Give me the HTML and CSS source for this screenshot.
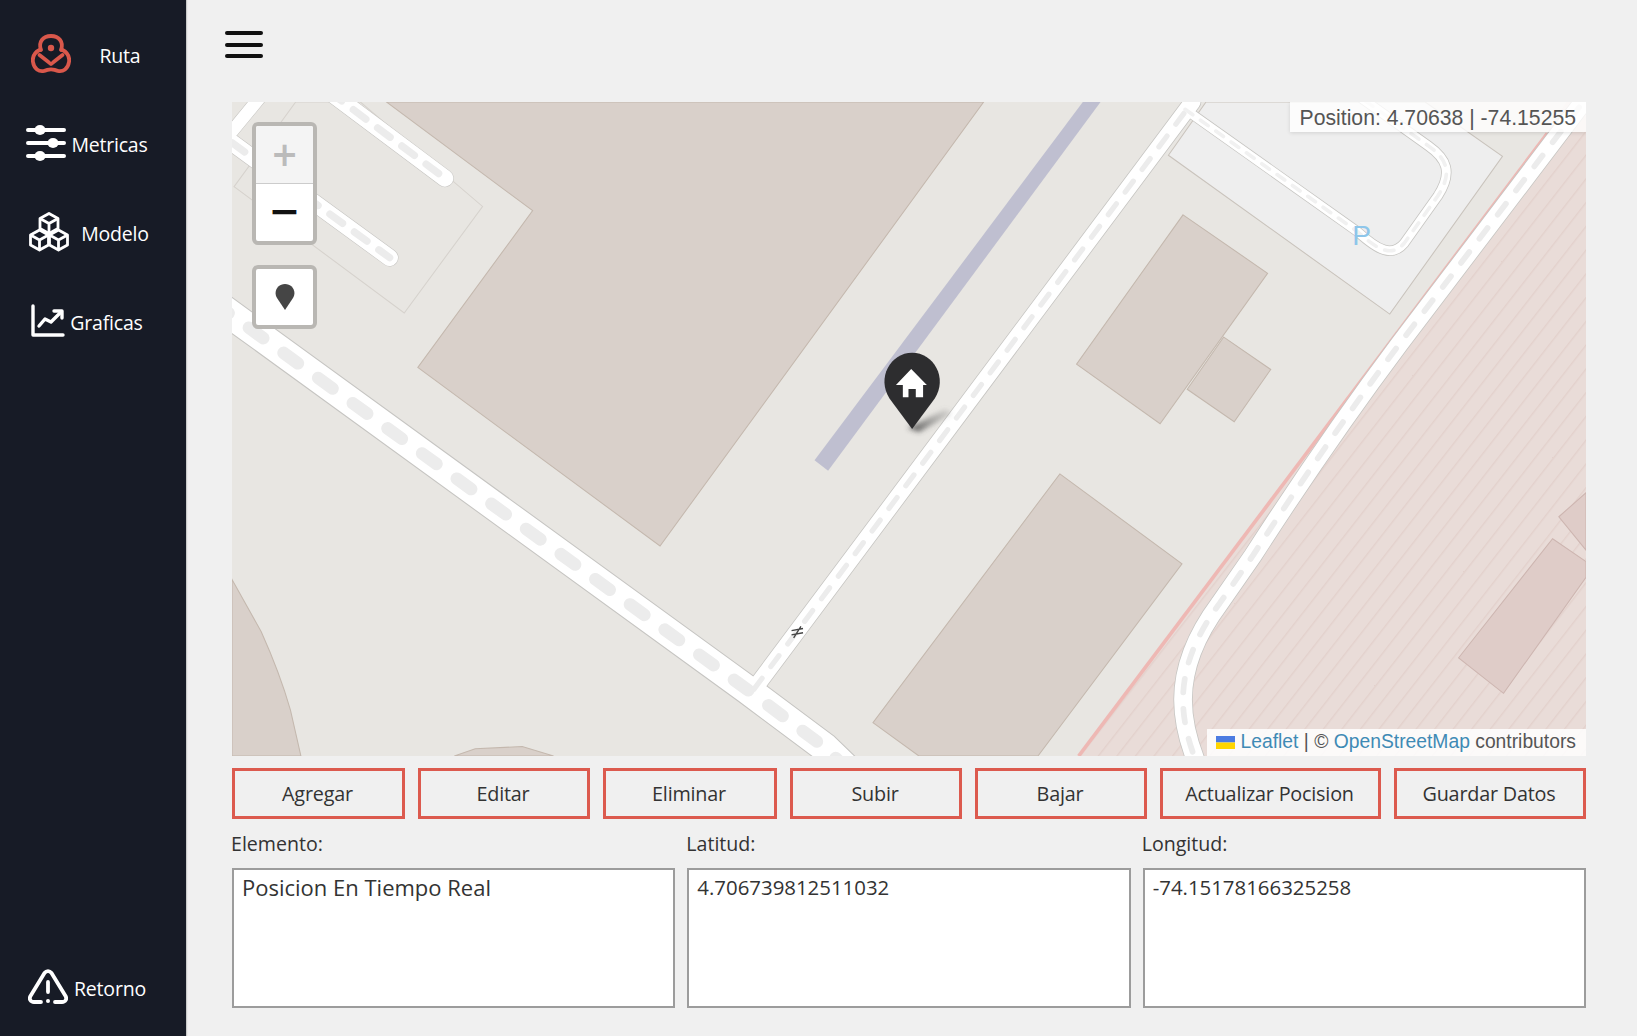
FILE: index.html
```html
<!DOCTYPE html>
<html lang="es">
<head>
<meta charset="utf-8">
<title>Ruta</title>
<link rel="stylesheet" href="styles.css">
</head>
<body>
<div class="app">
  <aside class="sidebar">
    <a class="nav-item nav-ruta">
      <svg class="icon" width="40" height="40" viewBox="0 0 40 40" fill="none" stroke="#d9584b" stroke-width="3.800" stroke-linecap="round" stroke-linejoin="round">
        <path d="M10 15C4 18 1 22 2 28C3 35 8 38 13 37C17 35 23 35 27 37C32 38 37 35 38 28C39 22 36 18 30 15"/>
        <path d="M8.500 21L20 30L31.500 21"/>
        <path d="M20 28L12 17C8 9 13 2 20 2C27 2 32 9 28 17Z" fill="#171b26" stroke="none"/>
        <path d="M10 16C7 8 12 2 20 2C28 2 33 8 30 16"/>
        <circle cx="20" cy="14" r="3.200" fill="#d9584b" stroke="none"/>
      </svg>
      <span>Ruta</span>
    </a>
    <a class="nav-item nav-metricas">
      <svg class="icon" width="40" height="36" viewBox="0 0 40 36" fill="none" stroke="#fff" stroke-width="4" stroke-linecap="round">
        <path d="M2 5H38M2 18H38M2 31H38"/>
        <ellipse cx="14" cy="5" rx="5.500" ry="5" fill="#fff" stroke="none"/>
        <ellipse cx="27" cy="18" rx="5.500" ry="5" fill="#fff" stroke="none"/>
        <ellipse cx="14" cy="31" rx="5.500" ry="5" fill="#fff" stroke="none"/>
      </svg>
      <span>Metricas</span>
    </a>
    <a class="nav-item nav-modelo">
      <svg class="icon" width="40" height="40" viewBox="0 0 40 40" fill="none" stroke="#fff" stroke-width="2.800" stroke-linejoin="round">
        <path d="M20 1.500L29 6.500V16.500L20 21.500L11 16.500V6.500Z"/>
        <path d="M11 6.500L20 11.500L29 6.500M20 11.500V21.500"/>
        <path d="M10.500 18L19.500 23V33L10.500 38L1.500 33V23Z"/>
        <path d="M1.500 23L10.500 28L19.500 23M10.500 28V38"/>
        <path d="M29.500 18L38.500 23V33L29.500 38L20.500 33V23Z"/>
        <path d="M20.500 23L29.500 28L38.500 23M29.500 28V38"/>
      </svg>
      <span>Modelo</span>
    </a>
    <a class="nav-item">
      <svg class="icon" width="34" height="33" viewBox="0 0 34 33" fill="none" stroke="#fff" stroke-width="3.400" stroke-linecap="round" stroke-linejoin="round">
        <path d="M2 2V31H32"/>
        <path d="M8 22L14 15L20 18L30 8"/>
        <path d="M23 7H31V14"/>
      </svg>
      <span>Graficas</span>
    </a>
    <a class="nav-item nav-retorno">
      <svg class="icon" width="40" height="36" viewBox="0 0 40 36" fill="none" stroke="#fff" stroke-width="3.800" stroke-linecap="round" stroke-linejoin="round">
        <path d="M13 33H6C2.500 33 .8 30 2.500 27L16.500 4C18.500 1.500 21.500 1.500 23.500 4L37.500 27C39.200 30 37.500 33 34 33H27"/>
        <path d="M20 13V23"/>
        <circle cx="20" cy="32" r="2" fill="#fff" stroke="none"/>
      </svg>
      <span>Retorno</span>
    </a>
  </aside>

  <main class="main">
    <header class="topbar">
      <div class="burger"><i></i><i></i><i></i></div>
    </header>

    <section class="map">
      <svg class="map-art" viewBox="222 98 1297 626" preserveAspectRatio="none">
        <defs>
          <pattern id="hatch" width="14" height="14" patternUnits="userSpaceOnUse" patternTransform="rotate(-52)">
            <rect width="14" height="14" fill="#e9dcd8"/>
            <rect width="14" height="1.300" fill="#e3d1cc"/>
          </pattern>
          <filter id="soft" x="-40%" y="-40%" width="180%" height="180%"><feGaussianBlur stdDeviation="2.500"/></filter>
          <linearGradient id="shade" x1="0" y1="1" x2="1" y2="0">
            <stop offset="0" stop-color="#333" stop-opacity=".8"/>
            <stop offset="1" stop-color="#777" stop-opacity=".15"/>
          </linearGradient>
        </defs>
        <rect class="land" x="222" y="98" width="1297" height="626"/>

        <polygon class="lot" points="224,179 283,98 345,98 462,198 387,300"/>
        <polygon class="parking" points="1119,149 1155,98 1365,98 1439,150 1331,301"/>

        <polygon class="building" points="370,98 942,98 632,523 400,352 510,202"/>
        <polygon class="building" points="1172,323 1217,354 1182,404 1137,373"/>
        <polygon class="building" points="1133,206 1214,262 1111,406 1031,349"/>
        <polygon class="building" points="1015,454 1132,540 994,724 880,724 836,692"/>
        <path class="building" d="M222 555L250 605Q268 645 278 680L288 724H222Z"/>
        <polygon class="building" points="435,724 455,717 500,715 530,724"/>

        <polygon class="purple" points="1037,98 1054,98 793,451 780,441"/>

        <polygon class="residential" points="1033,724 1480,130 1500,98 1519,98 1519,724"/>
        <polygon class="building-pink" points="1487,516 1519,538 1519,553 1440,664 1397,630"/>
        <polygon class="building-pink" points="1493,495 1519,472 1519,527"/>
        <path class="boundary" d="M1033 724L1482 128"/>

        <path class="casing wide" d="M205 290L715 660L790 716L820 745"/>
        <path class="casing mid" d="M722 660L1142 98"/>
        <path class="casing narrow" d="M315 88L426 171"/>
        <path class="casing narrow" d="M222 137L373 247"/>
        <path class="casing thin" d="M222 126L250 92"/>
        <path class="casing lane" d="M1135 105L1300 222C1320 240 1333 247 1345 233L1377 188C1392 165 1385 152 1368 140L1295 88"/>
        <path class="casing right" d="M1530 80L1340 330C1295 390 1240 470 1200 532L1168 578Q1133 625 1133 670Q1133 700 1148 735"/>

        <path class="fill wide" d="M205 290L715 660L790 716L820 745"/>
        <path class="fill mid" d="M722 660L1142 98"/>
        <path class="fill narrow" d="M315 88L426 171"/>
        <path class="fill narrow" d="M222 137L373 247"/>
        <path class="fill thin" d="M222 126L250 92"/>
        <path class="fill lane" d="M1135 105L1300 222C1320 240 1333 247 1345 233L1377 188C1392 165 1385 152 1368 140L1295 88"/>
        <path class="fill right" d="M1530 80L1340 330C1295 390 1240 470 1200 532L1168 578Q1133 625 1133 670Q1133 700 1148 735"/>

        <path class="dash wide-d" d="M205 290L715 660L790 716L820 745"/>
        <path class="dash mid-d" d="M722 660L1142 98"/>
        <path class="dash narrow-d" d="M315 88L426 171"/>
        <path class="dash narrow-d" d="M222 137L373 247"/>
        <path class="dash lane-d" d="M1135 105L1300 222C1320 240 1333 247 1345 233L1377 188C1392 165 1385 152 1368 140L1295 88"/>
        <path class="dash right-d" d="M1530 80L1340 330C1295 390 1240 470 1200 532L1168 578Q1133 625 1133 670Q1133 700 1148 735"/>

        <text class="parking-p" x="1295" y="235">P</text>
        <path class="oneway" d="M758 604L769 602M758 608L769 606M767 600L760 611"/>

        <path d="M869 410L905 392L912 396L880 414Z" fill="url(#shade)" filter="url(#soft)"/>
        <path class="pin" d="M873.500 411L852 382C839 362 853 338 873.500 338C894 338 908 362 895 382Z"/>
        <path class="pin-home" d="M872.600 353.600L887.600 368.800H884V380.600H877V372.800H870V380.600H864.600V368.800H858Z"/>
      </svg>

      <div class="controls">
        <div class="zoom">
          <span class="zoom-btn zoom-in">+</span>
          <span class="zoom-btn zoom-out">−</span>
        </div>
        <div class="locate">
          <svg width="22" height="28" viewBox="0 0 22 28"><path d="M11 27L3 15C-1 8 4 1 11 1C18 1 23 8 19 15Z" fill="#454545"/></svg>
        </div>
      </div>

      <div class="position">Position: 4.70638 | -74.15255</div>
      <div class="attribution"><svg class="flag" width="19" height="13" viewBox="0 0 19 13"><rect width="19" height="6.500" fill="#4c7be1"/><rect y="6.500" width="19" height="6.500" fill="#ffd500"/></svg> <a>Leaflet</a> | © <a>OpenStreetMap</a> contributors</div>
    </section>

    <div class="actions">
      <button class="btn">Agregar</button>
      <button class="btn">Editar</button>
      <button class="btn">Eliminar</button>
      <button class="btn">Subir</button>
      <button class="btn">Bajar</button>
      <button class="btn">Actualizar Pocision</button>
      <button class="btn">Guardar Datos</button>
    </div>

    <div class="fields">
      <label class="field"><span class="field-label">Elemento:</span><textarea class="field-box" readonly>Posicion En Tiempo Real</textarea></label>
      <label class="field"><span class="field-label">Latitud:</span><textarea class="field-box field-number" readonly>4.706739812511032</textarea></label>
      <label class="field"><span class="field-label">Longitud:</span><textarea class="field-box field-number" readonly>-74.15178166325258</textarea></label>
    </div>
  </main>
</div>
</body>
</html>
```

FILE: styles.css
```css
* { box-sizing: border-box; }

html, body {
  margin: 0;
  height: 100%;
  overflow: hidden;
}

body {
  background: #f0f0f0;
  color: #333;
  font-family: "Open Sans", "Noto Sans", sans-serif;
}

.app {
  display: flex;
  height: 1036px;
}

/* Sidebar */
.sidebar {
  width: 186px;
  flex: none;
  display: flex;
  flex-direction: column;
  padding: 9px 12px 5px 0;
  background: #171b26;
  box-shadow: 1px 0 1px #c9c9c9;
}

.nav-item {
  height: 89px;
  display: flex;
  align-items: center;
  justify-content: center;
  gap: 5px;
  color: #fff;
  font-size: 19.500px;
  font-weight: 500;
  letter-spacing: -.2px;
}

.nav-item span { padding-top: 4px; }

.nav-ruta { gap: 29px; padding-right: 3px; }
.nav-metricas { gap: 5px; }
.nav-modelo { gap: 12px; padding-left: 4px; }
.nav-retorno { margin-top: auto; gap: 6px; }

.icon { flex: none; }

/* Main column */
.main {
  flex: 1;
  min-width: 0;
  padding: 0 51px 28px 46px;
}

.topbar {
  height: 102px;
  padding-top: 31px;
}

.burger {
  width: 38px;
  margin-left: -7px;
  display: flex;
  flex-direction: column;
  gap: 7.500px;
}

.burger i {
  display: block;
  height: 4px;
  border-radius: 2px;
  background: #111;
}

/* Map */
.map {
  position: relative;
  height: 654px;
  overflow: hidden;
}

.map-art {
  display: block;
  width: 100%;
  height: 100%;
}

.land { fill: #e8e6e2; }
.lot { fill: #e8e6e2; stroke: #d6d2cd; stroke-width: 1; }
.parking { fill: #eeeeee; stroke: #c9c3bc; stroke-width: 1; }
.building { fill: #d9d0ca; stroke: #c4b8ae; stroke-width: 1; }
.building-pink { fill: #dfccc8; stroke: #cdb5b0; stroke-width: 1; }
.purple { fill: #bfbfd0; }
.residential { fill: url(#hatch); }
.boundary { fill: none; stroke: #eeb8b4; stroke-width: 3.500; }

.casing, .fill, .dash {
  fill: none;
  stroke-linecap: round;
  stroke-linejoin: round;
}

.casing { stroke: #c6c5c2; }
.fill { stroke: #fff; }
.dash { stroke: #ececec; }

.casing.wide { stroke-width: 29; }
.fill.wide { stroke-width: 27; }
.wide-d { stroke-width: 12; stroke-dasharray: 17 24; }

.casing.mid { stroke-width: 17; }
.fill.mid { stroke-width: 15.500; }
.mid-d { stroke-width: 5; stroke-dasharray: 13 14; }

.casing.narrow { stroke-width: 17; }
.fill.narrow { stroke-width: 16; }
.narrow-d { stroke-width: 7; stroke-dasharray: 15 14; }

.casing.thin { stroke-width: 13; }
.fill.thin { stroke-width: 12; }

.casing.lane { stroke-width: 10; }
.fill.lane { stroke-width: 8.500; }
.lane-d { stroke: #f1f1f1; stroke-width: 3.500; stroke-dasharray: 9 9; }

.casing.right { stroke-width: 18.500; }
.fill.right { stroke-width: 17; }
.right-d { stroke-width: 5.500; stroke-dasharray: 13 16; }

.parking-p {
  fill: #8ec6ea;
  font-family: "Liberation Sans", sans-serif;
  font-size: 27px;
}

.oneway { fill: none; stroke: #444; stroke-width: 1.300; }
.pin { fill: #2d2d2f; }
.pin-home { fill: #fff; }

/* Map overlays */
.controls {
  position: absolute;
  top: 20px;
  left: 20px;
  width: 65px;
  display: flex;
  flex-direction: column;
  gap: 20px;
}

.zoom,
.locate {
  border: 4px solid #b9b7b3;
  border-radius: 6px;
  background: #fff;
  overflow: hidden;
}

.zoom-btn {
  display: flex;
  align-items: center;
  justify-content: center;
  height: 57px;
  color: #111;
  font: bold 33px "DejaVu Sans", sans-serif;
}

.zoom-in {
  height: 58px;
  background: #f4f4f4;
  color: #bbb;
  border-bottom: 1px solid #ccc;
}

.zoom-out {
  padding-bottom: 3px;
  font-size: 38px;
}

.locate {
  height: 64px;
  display: flex;
  align-items: center;
  justify-content: center;
}

.position {
  position: absolute;
  top: 0;
  right: 0;
  height: 30px;
  padding: 0 10px;
  color: #555;
  background: rgba(255, 255, 255, .8);
  box-shadow: 0 1px 4px rgba(0, 0, 0, .12);
  font: 21.200px/31px "Liberation Sans", sans-serif;
}

.attribution {
  position: absolute;
  right: 0;
  bottom: 0;
  height: 27px;
  padding: 0 10px 0 9px;
  white-space: nowrap;
  color: #555;
  background: rgba(255, 255, 255, .85);
  font: 19.300px/26px "Liberation Sans", sans-serif;
}

.attribution a { color: #3f8ab5; }
.flag { vertical-align: -1px; }

/* Buttons */
.actions {
  display: grid;
  grid-template-columns: 173px 172px 174px 172px 172px 221px 192px;
  gap: 13px;
  margin-top: 12px;
}

.btn {
  height: 51px;
  padding: 0 2px 0 0;
  border: 3.500px solid #dc5a4e;
  background: #f0f0f0;
  color: #333;
  font: 19.800px "Open Sans", sans-serif;
  letter-spacing: -.2px;
}

/* Fields */
.fields {
  display: grid;
  grid-template-columns: repeat(3, 1fr);
  gap: 12px;
  margin-top: 12px;
}

.field { display: block; }

.field-label {
  display: block;
  height: 37px;
  margin-left: -1px;
  line-height: 26px;
  font-size: 19.600px;
  color: #333;
}

.field-box {
  display: block;
  width: 100%;
  height: 140px;
  padding: 3px 8px;
  border: 2px solid #9c9c9c;
  border-radius: 0;
  outline: none;
  resize: none;
  overflow: hidden;
  background: #fff;
  color: #333;
  font: 22px/1.3 "Open Sans", sans-serif;
}

.field-number { font-size: 20.400px; line-height: 29px; }
```
